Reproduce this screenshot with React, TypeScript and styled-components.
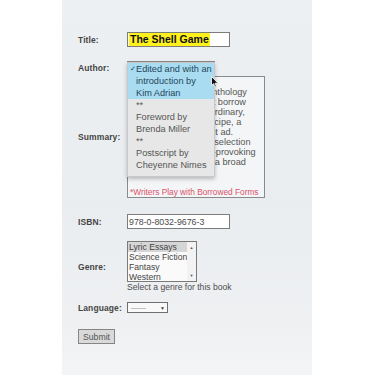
import React from 'react';
import styled, { createGlobalStyle } from 'styled-components';

const GlobalStyle = createGlobalStyle`
  html, body {
    margin: 0;
    padding: 0;
    background: #ffffff;
  }
  body {
    font-family: "Liberation Sans", Arial, sans-serif;
  }
`;

const Page = styled.div`
  width: 375px;
  height: 375px;
  display: flex;
  overflow: hidden;
  background: #ffffff;
`;

const Panel = styled.div`
  margin-left: 62px;
  width: 250px;
  height: 375px;
  box-sizing: border-box;
  padding: 32px 0 0 16px;
  background: linear-gradient(180deg, #edf0f3 0%, #eaedf0 55%, #eef0f2 85%, #f3f4f5 100%);
`;

const Row = styled.div<{ $top: number }>`
  display: grid;
  grid-template-columns: 49px 1fr;
  align-items: center;
  margin-top: ${p => p.$top}px;
`;

const Label = styled.label`
  font-size: 8.5px;
  font-weight: bold;
  color: #454545;
  letter-spacing: 0.1px;
`;

const Field = styled.div`
  position: relative;
  display: flex;
  flex-direction: column;
  align-items: flex-start;
`;

const TextInput = styled.div`
  width: 103px;
  height: 15px;
  box-sizing: border-box;
  border: 1px solid #7c7c7c;
  background: #ffffff;
  display: flex;
  align-items: center;
  padding-left: 1px;
  font-size: 8.8px;
  color: #4a4a4a;
`;

const Highlight = styled.span`
  background: #fff21c;
  color: #111;
  font-weight: bold;
  font-size: 10.5px;
  line-height: 13px;
  padding: 0 1px;
`;

const AuthorSelect = styled.div`
  width: 88px;
  height: 13px;
  box-sizing: border-box;
  border: 1px solid #888;
  background: #fafafa;
`;

const Menu = styled.ul`
  position: absolute;
  top: 1px;
  left: 0;
  z-index: 5;
  width: 88px;
  margin: 0;
  padding: 0 0 5px 0;
  list-style: none;
  background: #e7e7e7;
  border: 1px solid #c9c9c9;
  box-sizing: border-box;
  box-shadow: 0 2px 4px rgba(0, 0, 0, 0.25);
`;

const Option = styled.li<{ $active?: boolean }>`
  position: relative;
  padding: 0 2px 0 8px;
  font-size: 9.2px;
  line-height: 12px;
  white-space: nowrap;
  color: ${p => (p.$active ? '#24465a' : '#555')};
  background: ${p => (p.$active ? '#a9dcf1' : 'transparent')};
`;

const OptionLine = styled.span`
  display: block;
`;

const Check = styled.span`
  position: absolute;
  left: 2px;
  top: 0;
  font-size: 7px;
`;

const Cursor = styled.svg`
  position: absolute;
  left: 84px;
  top: 15px;
  z-index: 6;
`;

const SummaryBox = styled.div`
  width: 138px;
  height: 122px;
  box-sizing: border-box;
  border: 1px solid #8a8a8a;
  background: #f4f5f6;
  padding: 0 2px;
  font-size: 9.2px;
  line-height: 10px;
  color: #555;
  white-space: pre;
  overflow: hidden;
`;

const Note = styled.span`
  color: #d9536c;
  font-size: 8.3px;
`;

const ListBox = styled.div`
  width: 70px;
  height: 41px;
  box-sizing: border-box;
  border: 1px solid #7a7a7a;
  background: #fafafa;
  display: flex;
`;

const ListItems = styled.div`
  flex: 1;
  overflow: hidden;
`;

const ListItem = styled.div<{ $selected?: boolean }>`
  font-size: 8.6px;
  line-height: 10px;
  padding-left: 1px;
  color: #444;
  white-space: nowrap;
  background: ${p => (p.$selected ? '#d6d6d6' : 'transparent')};
`;

const Scrollbar = styled.div`
  width: 9px;
  display: flex;
  flex-direction: column;
  justify-content: space-between;
  align-items: center;
  padding: 3px 0;
  background: #f3f3f3;
  font-size: 4px;
  color: #555;
`;

const Help = styled.div`
  font-size: 8.6px;
  line-height: 10px;
  color: #4d4d4d;
`;

const SmallSelect = styled.div`
  width: 41px;
  height: 11px;
  box-sizing: border-box;
  border: 1px solid #6f6f6f;
  background: #f9f9f9;
  display: flex;
  align-items: center;
  justify-content: space-between;
  padding: 0 2px 0 3px;
  font-size: 5px;
  color: #444;
`;

const Button = styled.button`
  width: 37px;
  height: 15px;
  padding: 0;
  box-sizing: border-box;
  border: 1px solid #858585;
  background: #d9d9d9;
  font-family: "Liberation Sans", Arial, sans-serif;
  font-size: 8.7px;
  color: #555;
`;

const authorOptions = [
  { lines: ['Edited and with an', 'introduction by', 'Kim Adrian'], active: true },
  { lines: ['**'] },
  { lines: ['Foreword by', 'Brenda Miller'] },
  { lines: ['**'] },
  { lines: ['Postscript by', 'Cheyenne Nimes'] },
];

const summary = [
  'The Shell Game is',
  'an unusually lively anthology',
  'of lyrical writings that borrow',
  'and forms from the ordinary,',
  'such as the family recipe, a',
  'the index, or the want ad.',
  'This notably diverse selection',
  'of delightful, thought-provoking',
  'writing which covers a broad',
  'range of subjects.',
  '',
  '',
].join('\n');

const genres = ['Lyric Essays', 'Science Fiction', 'Fantasy', 'Western'];

export default function App() {
  return (
    <Page>
      <GlobalStyle />
      <Panel>
        <Row $top={0}>
          <Label>Title:</Label>
          <Field>
            <TextInput>
              <Highlight>The Shell Game</Highlight>
            </TextInput>
          </Field>
        </Row>

        <Row $top={14}>
          <Label>Author:</Label>
          <Field>
            <AuthorSelect />
            <Menu>
              {authorOptions.map((o, i) => (
                <Option key={i} $active={o.active}>
                  {o.active && <Check>✓</Check>}
                  {o.lines.map(l => (
                    <OptionLine key={l}>{l}</OptionLine>
                  ))}
                </Option>
              ))}
            </Menu>
            <Cursor width="8" height="12" viewBox="0 0 8 12">
              <path d="M0.5 0.5 L0.5 9.5 L2.6 7.6 L4 11 L5.4 10.4 L4 7.2 L7 7.2 Z" fill="#111" stroke="#fff" strokeWidth="0.8" />
            </Cursor>
          </Field>
        </Row>

        <Row $top={2}>
          <Label>Summary:</Label>
          <Field>
            <SummaryBox>
              {summary}
              <Note>*Writers Play with Borrowed Forms</Note>
            </SummaryBox>
          </Field>
        </Row>

        <Row $top={16}>
          <Label>ISBN:</Label>
          <Field>
            <TextInput>978-0-8032-9676-3</TextInput>
          </Field>
        </Row>

        <Row $top={12}>
          <Label>Genre:</Label>
          <Field>
            <ListBox>
              <ListItems>
                {genres.map((g, i) => (
                  <ListItem key={g} $selected={i === 0}>{g}</ListItem>
                ))}
              </ListItems>
              <Scrollbar>
                <span>▲</span>
                <span>▼</span>
              </Scrollbar>
            </ListBox>
            <Help>Select a genre for this book</Help>
          </Field>
        </Row>

        <Row $top={10}>
          <Label>Language:</Label>
          <Field>
            <SmallSelect>
              <span>---------</span>
              <span>▼</span>
            </SmallSelect>
          </Field>
        </Row>

        <Row $top={16}>
          <Field>
            <Button type="button">Submit</Button>
          </Field>
        </Row>
      </Panel>
    </Page>
  );
}
